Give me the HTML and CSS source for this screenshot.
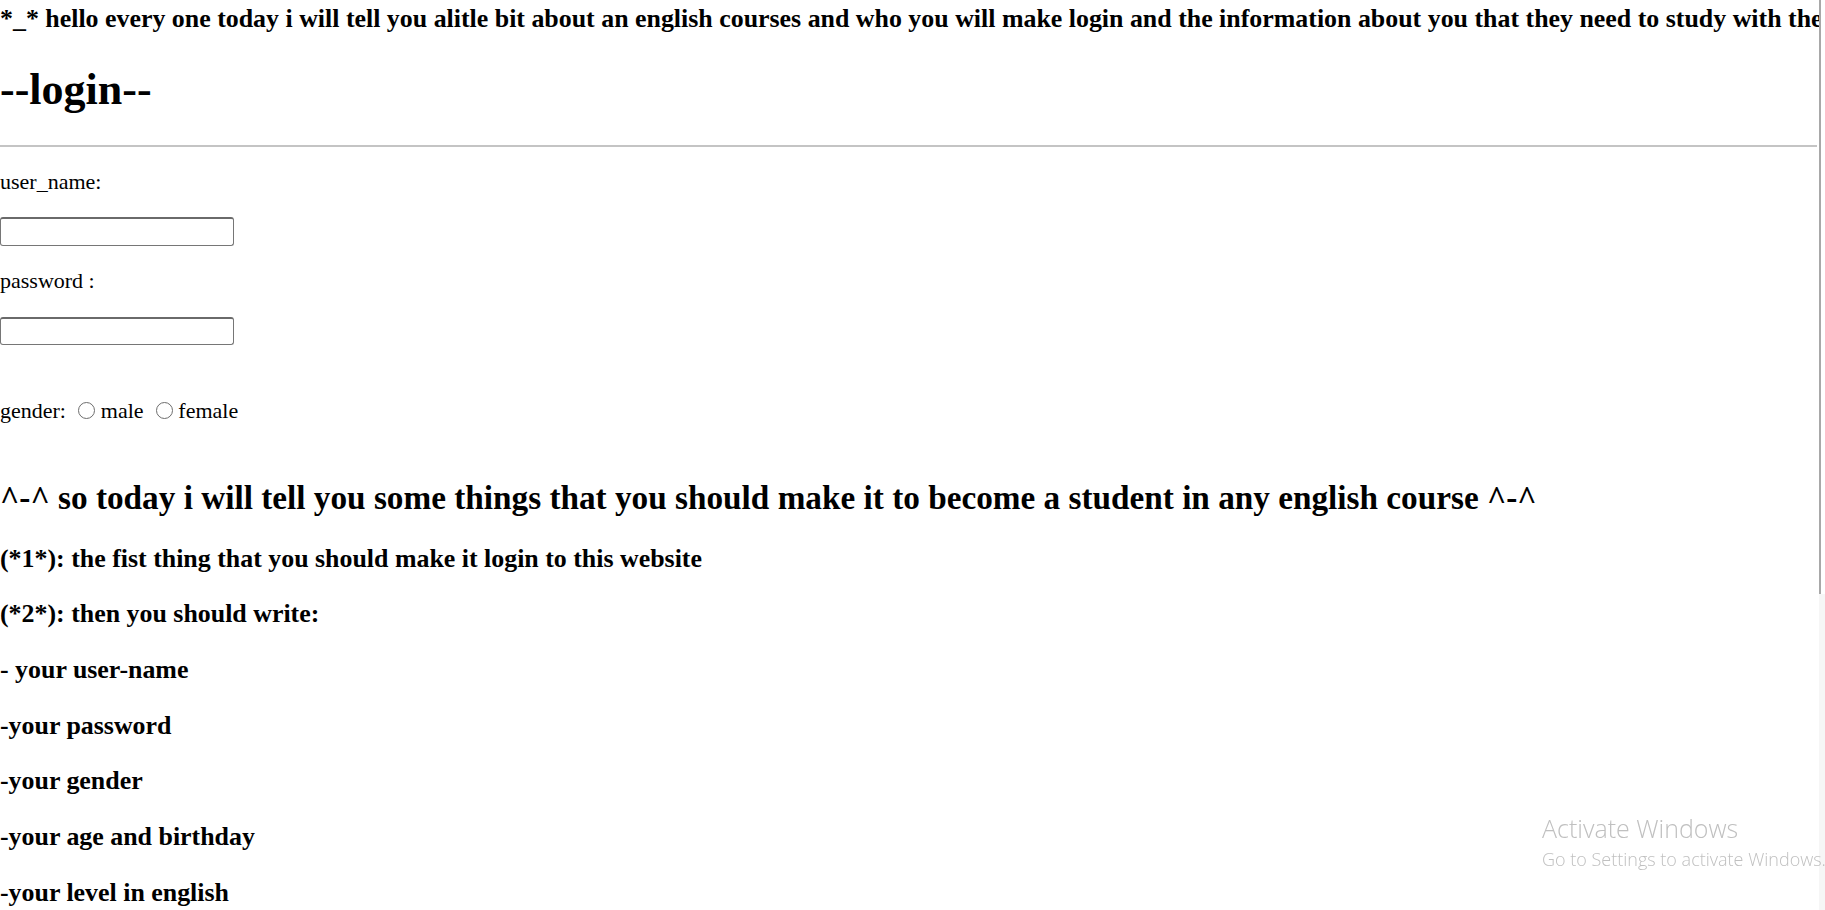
FILE: index.html
```html
<!DOCTYPE html>
<html lang="en">
<head>
<meta charset="utf-8">
<title>login</title>
<link rel="stylesheet" href="styles.css">
</head>
<body>
<main class="page">
  <h3 class="intro">*_* hello every one today i will tell you alitle bit about an english courses and who you will make login and the information about you that they need to study with them</h3>
  <h1 class="title">--login--</h1>
  <hr class="rule">
  <form class="login">
    <label class="field-label" for="user">user_name:</label>
    <input class="text-input" id="user" type="text">
    <label class="field-label password-label" for="pass">password :</label>
    <input class="text-input password-input" id="pass" type="password">
    <div class="gender">gender: <input class="radio" type="radio" name="gender" id="male"> <label for="male">male</label> <input class="radio" type="radio" name="gender" id="female"> <label for="female">female</label></div>
  </form>
  <h2 class="subtitle">^-^ so today i will tell you some things that you should make it to become a student in any english course ^-^</h2>
  <h3 class="step first">(*1*): the fist thing that you should make it login to this website</h3>
  <h3 class="step">(*2*): then you should write:</h3>
  <h3 class="step">- your user-name</h3>
  <h3 class="step">-your password</h3>
  <h3 class="step">-your gender</h3>
  <h3 class="step">-your age and birthday</h3>
  <h3 class="step">-your level in english</h3>
</main>
<div class="scrollbar"><div class="scroll-thumb"></div></div>
<div class="watermark">
  <div class="wm-title">Activate Windows</div>
  <div class="wm-sub">Go to Settings to activate Windows.</div>
</div>
</body>
</html>
```
FILE: styles.css
```css
html {
  overflow: hidden;
  background: #ffffff;
}
body {
  margin: 0;
  font-family: "Liberation Serif", "Times New Roman", serif;
  color: #000000;
  overflow: hidden;
}
.page {
  width: 1817px;
  padding-top: 4px;
}
.intro {
  margin: 0;
  font-size: 25.9px;
  line-height: 30px;
  font-weight: bold;
  white-space: nowrap;
}
.title {
  margin: 30.6px 0 0;
  font-size: 44px;
  line-height: 50px;
  font-weight: bold;
}
.rule {
  margin: 30.4px 0 0;
  height: 0;
  border: 0;
  border-top: 2px solid #c4c4c4;
}
.login {
  display: flex;
  flex-direction: column;
  align-items: flex-start;
}
.field-label {
  margin-top: 22px;
  font-size: 22px;
  line-height: 26px;
}
.password-label {
  margin-top: 22px;
}
.text-input {
  margin: 22px 0 0;
  width: 234px;
  height: 29px;
  box-sizing: border-box;
  border: 1px solid #767676;
  border-top: 2px solid #6a6a6a;
  border-radius: 3px;
  padding: 0 3px;
  font-size: 18px;
  background: #fff;
}
.password-input {
  margin-top: 23px;
  height: 28px;
}
.gender {
  margin-top: 53px;
  font-size: 22px;
  line-height: 26px;
  white-space: nowrap;
}
.radio {
  -webkit-appearance: none;
  appearance: none;
  width: 17px;
  height: 17px;
  margin: 0 0 0 6.8px;
  box-sizing: border-box;
  border: 1px solid #6d6d6d;
  border-radius: 50%;
  background: #fff;
  vertical-align: -1px;
}
.subtitle {
  margin: 54.8px 0 0;
  font-size: 33.25px;
  line-height: 38px;
  font-weight: bold;
  white-space: nowrap;
}
.step {
  margin: 25.67px 0 0;
  font-size: 25.9px;
  line-height: 30px;
  font-weight: bold;
  white-space: nowrap;
}
.step.first {
  margin-top: 26.8px;
}
.scrollbar {
  position: fixed;
  top: 0;
  right: 0;
  width: 6px;
  height: 100%;
  background: #f6f6f6;
}
.scroll-thumb {
  height: 594px;
  border-left: 2px solid #a8a8a8;
  background: #ffffff;
}
.watermark {
  position: fixed;
  left: 1542px;
  top: 813px;
  z-index: 10;
  font-family: "Open Sans", "Noto Sans", "DejaVu Sans", sans-serif;
  color: #c0c0c0;
  white-space: nowrap;
}
.wm-title {
  font-size: 25px;
  line-height: 30px;
  font-weight: 300;
}
.wm-sub {
  margin-top: 3.5px;
  font-size: 18px;
  line-height: 24px;
  font-weight: 300;
}
```
